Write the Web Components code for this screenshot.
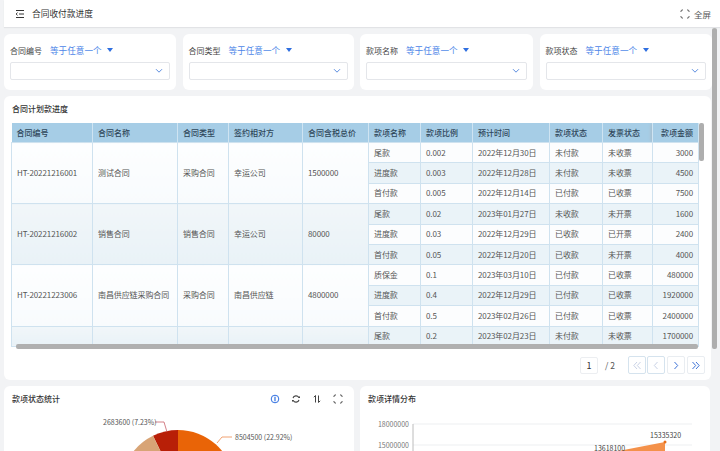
<!DOCTYPE html>
<html lang="zh"><head><meta charset="utf-8">
<style>
html,body{margin:0;height:451px;overflow:hidden;background:#f2f3f5}
body{font:8px "Noto Sans CJK SC","Noto Sans",sans-serif;color:#444;display:flex;flex-direction:column}
</style></head><body>
<app-header title-text="合同收付款进度"></app-header>
<page-body>
  <filter-row>
    <filter-card label="合同编号"></filter-card>
    <filter-card label="合同类型"></filter-card>
    <filter-card label="款项名称"></filter-card>
    <filter-card label="款项状态"></filter-card>
  </filter-row>
  <table-card></table-card>
  <chart-row>
    <chart-card heading="款项状态统计" tools><pie-chart></pie-chart></chart-card>
    <chart-card heading="款项详情分布"><area-chart></area-chart></chart-card>
  </chart-row>
</page-body>
<script>
const def=(name,css,html,init)=>customElements.define(name,class extends HTMLElement{
  connectedCallback(){ if(this.shadowRoot)return; const r=this.attachShadow({mode:'open'});
    r.innerHTML=`<style>${css}</style>`+(typeof html==='function'?html(this):html); init&&init(r,this);}
});
const FS=`<svg width="10" height="10" viewBox="0 0 10 10" fill="none" stroke="currentColor" stroke-width="1"><path d="M1 3V2.2C1 1.5 1.5 1 2.2 1H3M7 1h.8C8.5 1 9 1.5 9 2.2V3M9 7v.8C9 8.5 8.5 9 7.8 9H7M3 9h-.8C1.5 9 1 8.5 1 7.8V7"/></svg>`;

def('app-header',`:host{display:flex;align-items:center;height:27px;flex:none;background:#fff;margin-left:4px;box-shadow:0 1px 1px #e2e3e6;font-size:8.7px;color:#333;position:relative;z-index:1}
.m{margin-left:11px;display:flex}.t{margin-left:7px}.s{margin-left:auto;margin-right:9px;display:flex;align-items:center;gap:4px;color:#555;font-size:8.5px}`,
h=>`<span class="m"><svg width="10" height="10" viewBox="0 0 10 10" fill="none" stroke="#333" stroke-width="1"><path d="M1 1.5h8M4 5h5M1 8.5h8"/><path d="M2.6 3.6 1 5l1.6 1.4" stroke-width=".9"/></svg></span><span class="t">${h.getAttribute('title-text')}</span><span class="s">${FS}全屏</span>`);

def('page-body',`:host{display:flex;flex-direction:column;flex:1;min-height:0;margin-left:4px;padding-top:7px;gap:6px;position:relative;overflow:hidden}
.sb{position:absolute;right:3px;top:1px;width:5px;height:321px;background:#aeaeae;border-radius:2px}`,`<slot></slot><div class="sb"></div>`);

def('filter-row',`:host{display:grid;grid-template-columns:172px 171px 173px 172px;gap:6.5px;height:56px;flex:none}`,`<slot></slot>`);

def('filter-card',`:host{display:block;background:#fff;border-radius:6px;padding:7px 6px 0}
.r{display:flex;align-items:center;height:18px;font-size:8px;color:#444}
.op{color:#4d86e8;margin-left:8px;font-size:8.6px}
.c{margin-left:5.5px;width:0;height:0;border:3.2px solid transparent;border-top:4px solid #2f6fe0;border-bottom:0}
.b{height:18px;box-sizing:border-box;margin-top:3px;border:1px solid #e4e6ea;border-radius:2px;display:flex;align-items:center;justify-content:flex-end;padding-right:6px}`,
h=>`<div class="r"><span>${h.getAttribute('label')}</span><span class="op">等于任意一个</span><span class="c"></span></div>
<div class="b"><svg width="8" height="6" viewBox="0 0 8 6" fill="none" stroke="#5b8de0" stroke-width="1"><path d="M1 1.2 4 4.2 7 1.2"/></svg></div>`);

const groups=[
 {c:['HT-20221216001','测试合同','采购合同','幸运公司','1500000'],rows:[
  ['尾款','0.002','2022年12月30日','未付款','未收票','3000'],['进度款','0.003','2022年12月28日','未付款','未收票','4500'],['首付款','0.005','2022年12月14日','已付款','已收票','7500']]},
 {c:['HT-20221216002','销售合同','销售合同','幸运公司','80000'],rows:[
  ['尾款','0.02','2023年01月27日','未收款','未开票','1600'],['进度款','0.03','2022年12月29日','已收款','已开票','2400'],['首付款','0.05','2022年12月20日','已收款','未开票','4000']]},
 {c:['HT-20221223006','南昌供应链采购合同','采购合同','南昌供应链','4800000'],rows:[
  ['质保金','0.1','2023年03月10日','已付款','已收票','480000'],['进度款','0.4','2022年12月29日','已付款','已收票','1920000'],['首付款','0.5','2023年02月26日','已付款','已收票','2400000']]},
 {c:['','','','',''],rows:[['尾款','0.2','2023年02月23日','未付款','未收票','1700000']]}
];
const widths=[81,85,51,74,66,52,52,77,53,50,46];
const heads=['合同编号','合同名称','合同类型','签约相对方','合同含税总价','款项名称','款项比例','预计时间','款项状态','发票状态','款项金额'];
def('data-table',`:host{display:block;position:relative;height:226px;margin:0 7px;overflow:hidden;width:693px;background:#fff}
table{border-collapse:collapse;table-layout:fixed;width:687px;font-size:8px;color:#555;line-height:1}
th{height:19px;background:#a6cde6;color:#2f475a;font-weight:500;text-align:left;padding:0 0 0 5px;border-right:1px solid #cfe4f2;font-size:8px}
td{padding:0 0 0 5px;height:19.4px;border:1px solid #cfe2ef;white-space:nowrap;overflow:hidden;background:#fcfdfe;letter-spacing:-.1px}
tr.z td.v{background:#eaf3f8} td.g{background:linear-gradient(#fdfeff,#f8fbfd)} td.g.alt{background:linear-gradient(#f1f6f9,#e9f2f7)}
td.last,th.last{text-align:right;padding:0 5px 0 0;box-shadow:-3px 0 3px -1px #a9bcc9}
.h{position:absolute;left:5px;right:6px;bottom:0;height:5px;background:#b0b0b0;border-radius:2px}
.v2{position:absolute;right:0;top:0;width:5px;height:38px;background:#aeaeae;border-radius:2px}`,
()=>{let n=0,b='';groups.forEach((g,i)=>g.rows.forEach((r,j)=>{
  const z=n++%2?'z':'';
  b+=`<tr class="${z}">`+(j==0?g.c.map(t=>`<td class="g ${i%2?'alt':''}" rowspan="${g.rows.length}">${t}</td>`).join(''):'')+
  r.map((t,k)=>`<td class="v${k==5?' last':''}">${t}</td>`).join('')+`</tr>`;}));
 return `<table><colgroup>${widths.map(w=>`<col style="width:${w}px">`).join('')}</colgroup><thead><tr>${heads.map((t,i)=>`<th class="${i==10?'last':''}">${t}</th>`).join('')}</tr></thead><tbody>${b}</tbody></table><div class="h"></div><div class="v2"></div>`});

def('table-card',`:host{display:flex;flex-direction:column;height:284px;flex:none;background:#fff;border-radius:6px;width:707px}
.t{font-size:8px;color:#333;font-weight:500;height:27px;line-height:26px;padding-left:8px}
.f{flex:1}`,`<div class="t">合同计划款进度</div><data-table></data-table><div class="f"><pager-bar></pager-bar></div>`);

def('pager-bar',`:host{display:flex;align-items:center;justify-content:flex-end;gap:2px;padding:7px 6px 0 0;font-size:9px;color:#555}
.n{width:18px;height:17px;box-sizing:border-box;border:1px solid #eceef1;border-radius:2px;display:flex;align-items:center;justify-content:center;color:#333}
.tot{margin:0 11px 0 5px;font-size:8.5px}
.x{width:18px;height:18px;box-sizing:border-box;border:1px solid #e9edf1;border-radius:2px;display:flex;align-items:center;justify-content:center}
.off{border-color:#d5e3ee}.off+.off{margin-left:-1px}`,
()=>{const a=(d,c)=>`<svg width="10" height="9" viewBox="0 0 10 9" fill="none" stroke="${c}" stroke-width="1"><path d="${d}"/></svg>`;
 return `<span class="n">1</span><span class="tot">/ 2</span>
<span class="x off">${a('M5 1 1.8 4.5 5 8M8.5 1 5.3 4.5 8.5 8','#c9d2e6')}</span><span class="x off">${a('M6.5 1 3.3 4.5 6.5 8','#c9d2e6')}</span><span class="x">${a('M3.5 1 6.7 4.5 3.5 8','#3f74d8')}</span><span class="x">${a('M1.5 1 4.7 4.5 1.5 8M5 1 8.2 4.5 5 8','#3f74d8')}</span>`});

def('chart-row',`:host{display:grid;grid-template-columns:350px 350px;gap:6px;flex:none;height:120px}`,`<slot></slot>`);
def('chart-card',`:host{display:block;background:#fff;border-radius:6px;height:120px;overflow:hidden;position:relative}
.h{display:flex;align-items:center;height:26px;box-sizing:border-box;padding:0 8px 1px;font-size:8px;color:#333;font-weight:500}
.i{margin-left:auto;display:flex;gap:11px;color:#444;padding-right:3px}`,
h=>`<div class="h"><span>${h.getAttribute('heading')}</span>${h.hasAttribute('tools')?`<span class="i">
<svg width="10" height="10" viewBox="0 0 10 10" fill="none" stroke="#2f6fe0"><circle cx="5" cy="5" r="3.8"/><path d="M5 2.8v4.4" stroke-width="1.2"/></svg>
<svg width="10" height="10" viewBox="0 0 10 10" fill="none" stroke="#444" stroke-width="1.1"><path d="M2 4.2A3.1 3.1 0 0 1 7.8 3.6M8 5.8A3.1 3.1 0 0 1 2.2 6.4"/><path d="M6.8 4h2.2V1.9zM3.2 6H1v2.1z" fill="#444" stroke="none"/></svg>
<svg width="10" height="10" viewBox="0 0 10 10" fill="none" stroke="#444"><path d="M3.5 8.5V1.5L1.8 3.2M6.5 1.5v7l1.7-1.7"/></svg>
<span style="display:flex">${FS}</span></span>`:''}</div><slot></slot>`);

def('pie-chart',`:host{display:block;position:relative;height:94px}
svg{position:absolute;left:0;top:0}
text{font:7px "Noto Sans CJK SC",sans-serif;fill:#555}`,
`<svg width="350" height="94" viewBox="0 0 350 94">
<path d="M174 75 L174 18 A57 57 0 0 1 230.5 68 Z" fill="#e96407"/>
<path d="M174 75 L174 18 A57 57 0 0 0 149 23.8 Z" fill="#b81f07"/>
<path d="M174 75 L149 23.8 A57 57 0 0 0 124.6 46.5 Z" fill="#d8a476"/>
<path d="M163 20 L160 10 L151 10" fill="none" stroke="#c9616a" stroke-width=".8"/>
<path d="M213 31 L218 25 L228 25" fill="none" stroke="#ee8a4e" stroke-width=".8"/>
<text x="99" y="12.5">2683600 (7.23%)</text><text x="231" y="27.5">8504500 (22.92%)</text>
</svg>`);

def('area-chart',`:host{display:block;position:relative;height:94px}
svg{position:absolute;left:0;top:0}
text{font:7px "Noto Sans CJK SC",sans-serif;fill:#777}`,
`<svg width="350" height="94" viewBox="0 0 350 94">
<path d="M53 12H332M53 33H332" stroke="#e9ebee" stroke-width=".8"/>
<path d="M53 12V94" stroke="#bcbcbc" stroke-width="1"/>
<path d="M248 41 L305 30 V94 H248 Z" fill="#f4914a"/>
<circle cx="305" cy="30" r="1.5" fill="#e8701a"/>
<text x="49" y="14.5" text-anchor="end">18000000</text><text x="49" y="35.5" text-anchor="end">15000000</text>
<text x="234" y="38.5" style="fill:#444">13618100</text><text x="290" y="25.5" style="fill:#444">15335320</text>
</svg>`);
</script>
</body></html>
